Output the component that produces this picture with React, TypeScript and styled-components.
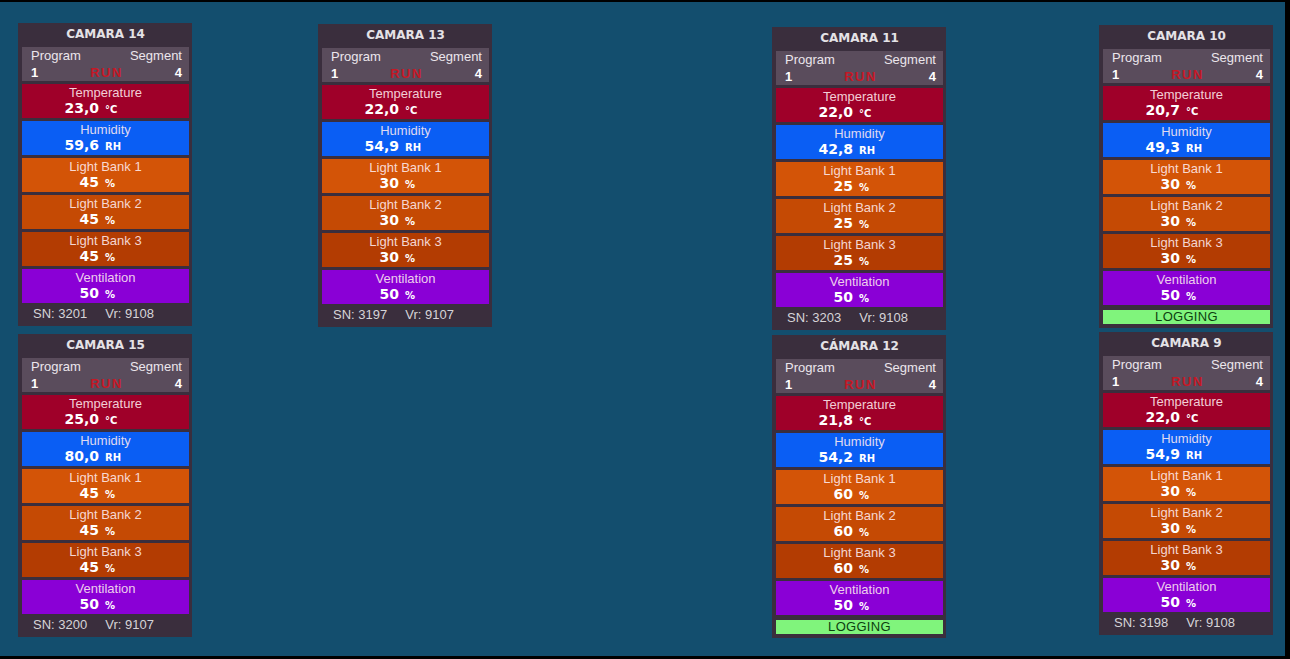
import React from "react";
import styled, { createGlobalStyle } from "styled-components";

const Global = createGlobalStyle`
  html, body { margin: 0; padding: 0; background: #000; }
  body { font-family: "Liberation Sans", Arial, sans-serif; }
`;

const Screen = styled.div`
  width: 1290px;
  height: 659px;
  box-sizing: border-box;
  background: #134e6e;
  border-top: 2px solid #000;
  border-right: 5px solid #000;
  border-bottom: 3px solid #000;
  display: flex;
  align-items: flex-start;
  overflow: hidden;
`;

const Column = styled.div<{ $ml: number; $mt: number; $gap: number }>`
  margin-left: ${(p) => p.$ml}px;
  margin-top: ${(p) => p.$mt}px;
  display: flex;
  flex-direction: column;
  gap: ${(p) => p.$gap}px;
`;

const Card = styled.div`
  width: 174px;
  height: 303px;
  box-sizing: border-box;
  background: #3a2e3d;
  padding: 0 3px 0 4px;
  display: flex;
  flex-direction: column;
`;

const Title = styled.div`
  height: 24px;
  line-height: 23px;
  text-align: center;
  font-family: "DejaVu Sans", Verdana, sans-serif;
  font-weight: bold;
  font-size: 12px;
  color: #e4e2e6;
`;

const ProgramBlock = styled.div`
  height: 34px;
  background: #5a4c5c;
  padding: 1px 7px 0 9px;
  box-sizing: border-box;
  display: grid;
  grid-template-columns: 1fr auto 1fr;
  grid-template-rows: 16px 17px;
  font-size: 13px;
  color: #ece6ec;
`;

const PLabel = styled.span<{ $right?: boolean }>`
  line-height: 16px;
  text-align: ${(p) => (p.$right ? "right" : "left")};
`;

const PNum = styled.span<{ $right?: boolean }>`
  line-height: 17px;
  font-weight: bold;
  color: #fff;
  text-align: ${(p) => (p.$right ? "right" : "left")};
`;

const Run = styled.span`
  line-height: 17px;
  font-weight: bold;
  font-size: 13px;
  letter-spacing: 1.5px;
  color: #d8101c;
  opacity: 0.85;
  text-align: center;
`;

const Rows = styled.div`
  margin-top: 3px;
  display: flex;
  flex-direction: column;
  gap: 3px;
`;

const Row = styled.div<{ $bg: string }>`
  height: 34px;
  background: ${(p) => p.$bg};
  display: flex;
  flex-direction: column;
  box-sizing: border-box;
  padding-top: 1px;
`;

const RowLabel = styled.div`
  text-align: center;
  font-size: 13px;
  line-height: 15px;
  color: rgba(255, 236, 240, 0.88);
`;

const ValueLine = styled.div`
  display: flex;
  align-items: baseline;
  line-height: 17px;
`;

const Num = styled.span`
  width: 77px;
  text-align: right;
  font-family: "DejaVu Sans", Verdana, sans-serif;
  font-weight: bold;
  font-size: 14px;
  color: #fff;
`;

const Unit = styled.span`
  margin-left: 6px;
  font-family: "DejaVu Sans", Verdana, sans-serif;
  font-weight: bold;
  font-size: 10px;
  color: #fff;
`;

const Footer = styled.div`
  height: 22px;
  line-height: 22px;
  padding-left: 11px;
  font-size: 13px;
  color: #d6d4d8;
  display: flex;
  gap: 18px;
`;

const Logging = styled.div`
  margin-top: 5px;
  height: 14px;
  line-height: 14px;
  background: #80f47c;
  color: #0d3f10;
  text-align: center;
  font-size: 13px;
  letter-spacing: 0.3px;
`;

type CamData = {
  name: string;
  temp: string;
  hum: string;
  lb: string;
  vent: string;
  sn?: string;
  vr?: string;
};

const ROW_COLORS = {
  temp: "#9f0029",
  hum: "#0a5ef4",
  lb1: "#d35407",
  lb2: "#c54a04",
  lb3: "#b33c02",
  vent: "#8a00d6",
};

function Camera({ d }: { d: CamData }) {
  const rows: [string, string, string, string][] = [
    ["Temperature", d.temp, "°C", ROW_COLORS.temp],
    ["Humidity", d.hum, "RH", ROW_COLORS.hum],
    ["Light Bank 1", d.lb, "%", ROW_COLORS.lb1],
    ["Light Bank 2", d.lb, "%", ROW_COLORS.lb2],
    ["Light Bank 3", d.lb, "%", ROW_COLORS.lb3],
    ["Ventilation", d.vent, "%", ROW_COLORS.vent],
  ];
  return (
    <Card>
      <Title>{d.name}</Title>
      <ProgramBlock>
        <PLabel>Program</PLabel>
        <span />
        <PLabel $right>Segment</PLabel>
        <PNum>1</PNum>
        <Run>RUN</Run>
        <PNum $right>4</PNum>
      </ProgramBlock>
      <Rows>
        {rows.map(([label, val, unit, bg]) => (
          <Row key={label} $bg={bg}>
            <RowLabel>{label}</RowLabel>
            <ValueLine>
              <Num>{val}</Num>
              <Unit>{unit}</Unit>
            </ValueLine>
          </Row>
        ))}
      </Rows>
      {d.sn ? (
        <Footer>
          <span>SN: {d.sn}</span>
          <span>Vr: {d.vr}</span>
        </Footer>
      ) : (
        <Logging>LOGGING</Logging>
      )}
    </Card>
  );
}

const cams: Record<string, CamData> = {
  c14: { name: "CAMARA 14", temp: "23,0", hum: "59,6", lb: "45", vent: "50", sn: "3201", vr: "9108" },
  c15: { name: "CAMARA 15", temp: "25,0", hum: "80,0", lb: "45", vent: "50", sn: "3200", vr: "9107" },
  c13: { name: "CAMARA 13", temp: "22,0", hum: "54,9", lb: "30", vent: "50", sn: "3197", vr: "9107" },
  c11: { name: "CAMARA 11", temp: "22,0", hum: "42,8", lb: "25", vent: "50", sn: "3203", vr: "9108" },
  c12: { name: "CÁMARA 12", temp: "21,8", hum: "54,2", lb: "60", vent: "50" },
  c10: { name: "CAMARA 10", temp: "20,7", hum: "49,3", lb: "30", vent: "50" },
  c9: { name: "CAMARA 9", temp: "22,0", hum: "54,9", lb: "30", vent: "50", sn: "3198", vr: "9108" },
};

export default function App() {
  return (
    <>
      <Global />
      <Screen>
        <Column $ml={18} $mt={21} $gap={8}>
          <Camera d={cams.c14} />
          <Camera d={cams.c15} />
        </Column>
        <Column $ml={126} $mt={22} $gap={8}>
          <Camera d={cams.c13} />
        </Column>
        <Column $ml={280} $mt={25} $gap={5}>
          <Camera d={cams.c11} />
          <Camera d={cams.c12} />
        </Column>
        <Column $ml={153} $mt={23} $gap={4}>
          <Camera d={cams.c10} />
          <Camera d={cams.c9} />
        </Column>
      </Screen>
    </>
  );
}
